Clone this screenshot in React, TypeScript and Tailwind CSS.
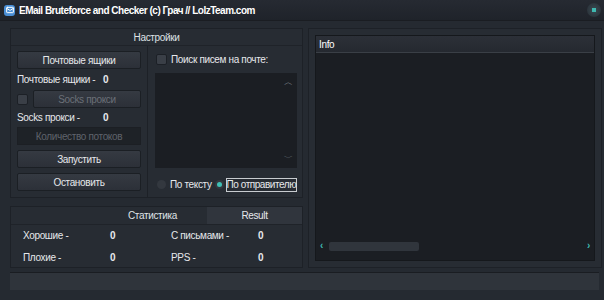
import { Mail } from "lucide-react";

const font = { fontFamily: '"Liberation Sans", Arial, sans-serif' };

function Btn({ label, disabled }: { label: string; disabled?: boolean }) {
  return (
    <div
      className={[
        "flex h-[18px] flex-1 items-center justify-center rounded-[2px] border border-[#1b1f24] bg-gradient-to-b from-[#353a42] to-[#2c3038]",
        disabled ? "text-[#6b7078]" : "text-[#e6e8eb]",
      ].join(" ")}
    >
      {label}
    </div>
  );
}

function Check() {
  return <div className="h-[11px] w-[11px] shrink-0 rounded-[2px] border border-[#1c2026] bg-[#3a3f47]" />;
}

function Stat({ label, value }: { label: string; value: string }) {
  return (
    <div className="flex items-center text-[#e6e8eb]">
      <span className="w-[87px]">{label}</span>
      <span className="font-bold">{value}</span>
    </div>
  );
}

export default function App() {
  return (
    <div
      style={font}
      className="flex h-[300px] w-[604px] flex-col whitespace-nowrap bg-[#252a31] text-[10px] tracking-[-0.35px] text-[#e6e8eb]"
    >
      {/* title bar */}
      <div className="flex h-[21px] items-center border-b border-[#1a1d22] bg-gradient-to-b from-[#262a32] to-[#1f232a] pl-[4px] pr-[3px]">
        <div className="flex h-[11px] w-[11px] items-center justify-center rounded-[3px] bg-[#4a8fd6]">
          <Mail className="h-[8px] w-[8px] text-white" strokeWidth={3} />
        </div>
        <span className="ml-[4px] text-[10px] font-bold tracking-[-0.5px] text-white">
          EMail Bruteforce and Checker (c) Грач // LolzTeam.com
        </span>
        <div className="ml-auto flex h-[14px] w-[14px] items-center justify-center rounded-full bg-[radial-gradient(circle,#3a4a52,#262c33)]">
          <div className="h-[4px] w-[4px] bg-[#3fb8b0]" />
        </div>
      </div>

      <div className="flex gap-[5px] pl-[10px] pr-[2px] pt-[7px]">
        {/* left column */}
        <div className="flex w-[293px] shrink-0 flex-col gap-[8px]">
          {/* settings group */}
          <div className="flex h-[170px] flex-col border border-[#1d2127] bg-[#272c33]">
            <div className="flex h-[17px] items-center justify-center border-b border-[#1f2329] text-[#dfe2e6]">
              Настройки
            </div>
            <div className="flex flex-1">
              <div className="flex w-[137px] shrink-0 flex-col border-r border-[#1d2127] px-[6px] pt-[5px]">
                <div className="flex">
                  <Btn label="Почтовые ящики" />
                </div>
                <div className="flex h-[21px] items-center">
                  <span className="w-[86px] shrink-0">Почтовые ящики -</span>
                  <span className="font-bold">0</span>
                </div>
                <div className="flex items-center gap-[5px]">
                  <Check />
                  <Btn label="Socks прокси" disabled />
                </div>
                <div className="flex h-[19px] items-center">
                  <span className="w-[86px] shrink-0">Socks прокси -</span>
                  <span className="font-bold">0</span>
                </div>
                <div className="flex h-[18px] items-center justify-center border border-[#1c1f24] bg-[#1e2227] text-[#5e636b]">
                  Количество потоков
                </div>
                <div className="mt-[5px] flex">
                  <Btn label="Запустить" />
                </div>
                <div className="mt-[5px] flex">
                  <Btn label="Остановить" />
                </div>
              </div>
              <div className="flex min-w-0 flex-1 flex-col pl-[7px] pr-[5px] pt-[6px]">
                <div className="flex items-center gap-[4px] pl-[1px]">
                  <Check />
                  <span>Поиск писем на почте:</span>
                </div>
                <div className="mt-[6px] flex h-[95px] flex-col items-end justify-between border border-[#1b1e23] bg-[#1b1e23] px-[3px] py-[2px] text-[9px] text-[#7a8088]">
                  <span>︿</span>
                  <span>﹀</span>
                </div>
                <div className="mt-[9px] flex items-center">
                  <div className="ml-[2px] h-[9px] w-[9px] shrink-0 rounded-full bg-[#33383f]" />
                  <span className="ml-[4px]">По тексту</span>
                  <div className="ml-[3px] flex h-[9px] w-[9px] shrink-0 items-center justify-center rounded-full bg-[#33383f]">
                    <div className="h-[5px] w-[5px] rounded-full bg-[#3fc0b5]" />
                  </div>
                  <span className="ml-[2px] border border-[#c8ccd0] leading-[12px] tracking-[-0.45px]">По отправителю</span>
                </div>
              </div>
            </div>
          </div>

          {/* stats group */}
          <div className="flex h-[62px] flex-col border border-[#1d2127] bg-[#272c33]">
            <div className="flex h-[18px] border-b border-[#1f2329]">
              <div className="flex flex-1 items-center justify-end pr-[30px] text-[#dfe2e6]">Статистика</div>
              <div className="flex w-[95px] items-center justify-center bg-[#30353d] text-[#e6e8eb]">Result</div>
            </div>
            <div className="grid flex-1 grid-cols-[148px_1fr] content-center gap-y-[7px] pl-[12px]">
              <Stat label="Хорошие -" value="0" />
              <Stat label="С письмами -" value="0" />
              <Stat label="Плохие -" value="0" />
              <Stat label="PPS -" value="0" />
            </div>
          </div>
        </div>

        {/* right panel */}
        <div className="flex h-[240px] flex-1 border border-[#1d2127] bg-[#272c33] p-[6px]">
          <div className="flex flex-1 flex-col border border-[#15181c] bg-[#1b1e23]">
            <div className="flex h-[17px] items-center border-b border-[#3a3f46] bg-gradient-to-b from-[#2c3038] to-[#252930] pl-[3px] text-white">
              Info
            </div>
            <div className="flex-1" />
            <div className="mb-[9px] flex h-[10px] items-center px-[4px]">
              <span className="text-[10px] font-bold leading-none text-[#3fb8b0]">‹</span>
              <div className="ml-[6px] h-[9px] w-[90px] rounded-[2px] bg-[#30353c]" />
              <span className="ml-auto text-[10px] font-bold leading-none text-[#3fb8b0]">›</span>
            </div>
          </div>
        </div>
      </div>

      {/* status bar */}
      <div className="ml-[10px] mr-[5px] mt-[4px] h-[18px] border-t border-[#1a1d22] bg-[#2f343b]" />
    </div>
  );
}
